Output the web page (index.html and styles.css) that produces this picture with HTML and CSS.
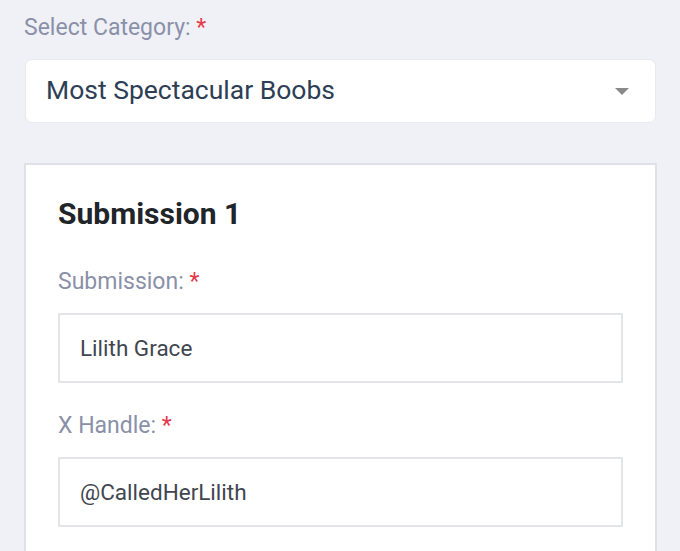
FILE: index.html
```html
<!DOCTYPE html>
<html lang="en">
<head>
<meta charset="utf-8">
<title>Submission</title>
<link rel="stylesheet" href="styles.css">
</head>
<body>
<main class="page">
  <label class="field-label">Select Category: <span class="req">*</span></label>
  <div class="select">
    <span class="select-value">Most Spectacular Boobs</span>
    <span class="caret"></span>
  </div>
  <section class="card">
    <h2 class="card-title">Submission 1</h2>
    <div class="group">
      <label class="field-label">Submission: <span class="req">*</span></label>
      <div class="input">Lilith Grace</div>
    </div>
    <div class="group">
      <label class="field-label">X Handle: <span class="req">*</span></label>
      <div class="input">@CalledHerLilith</div>
    </div>
  </section>
</main>
</body>
</html>
```
FILE: styles.css
```css
* { box-sizing: border-box; }
html, body { margin: 0; padding: 0; }
body {
  background: #f0f1f6;
  font-family: Roboto, "Noto Sans", "Liberation Sans", sans-serif;
  height: 551px;
  overflow: hidden;
}
.page {
  padding: 15px 24px 0 24px;
  width: 680px;
}
.field-label {
  display: block;
  font-size: 23px;
  line-height: 26px;
  color: #8a90a8;
  margin-bottom: 18px;
}
.req { color: #e53a4e; }
.select {
  display: flex;
  align-items: center;
  justify-content: space-between;
  background: #fff;
  border: 1px solid #e9eaf0;
  border-radius: 7px;
  height: 64px;
  padding: 0 26px 3px 20px;
  margin-left: 1px;
  width: 631px;
}
.select-value {
  font-size: 26.5px;
  line-height: 32px;
  color: #2d3e55;
}
.caret {
  width: 0;
  height: 0;
  border-left: 7.5px solid transparent;
  border-right: 7.5px solid transparent;
  border-top: 7px solid #8a8a8a;
  margin-top: 4px;
}
.card {
  margin-top: 40px;
  background: #fff;
  border: 2px solid #dfe1e8;
  border-bottom: 0;
  padding: 31px 32px 0 32px;
  width: 633px;
  height: 400px;
}
.card-title {
  margin: 0;
  font-size: 30px;
  line-height: 36px;
  font-weight: 700;
  color: #212529;
}
.group { margin-top: 37px; }
.group + .group { margin-top: 30px; }
.input {
  border: 2px solid #e3e5eb;
  height: 70px;
  padding: 20px 20px;
  font-size: 22.5px;
  line-height: 26px;
  color: #3f4650;
  background: #fff;
}
```
